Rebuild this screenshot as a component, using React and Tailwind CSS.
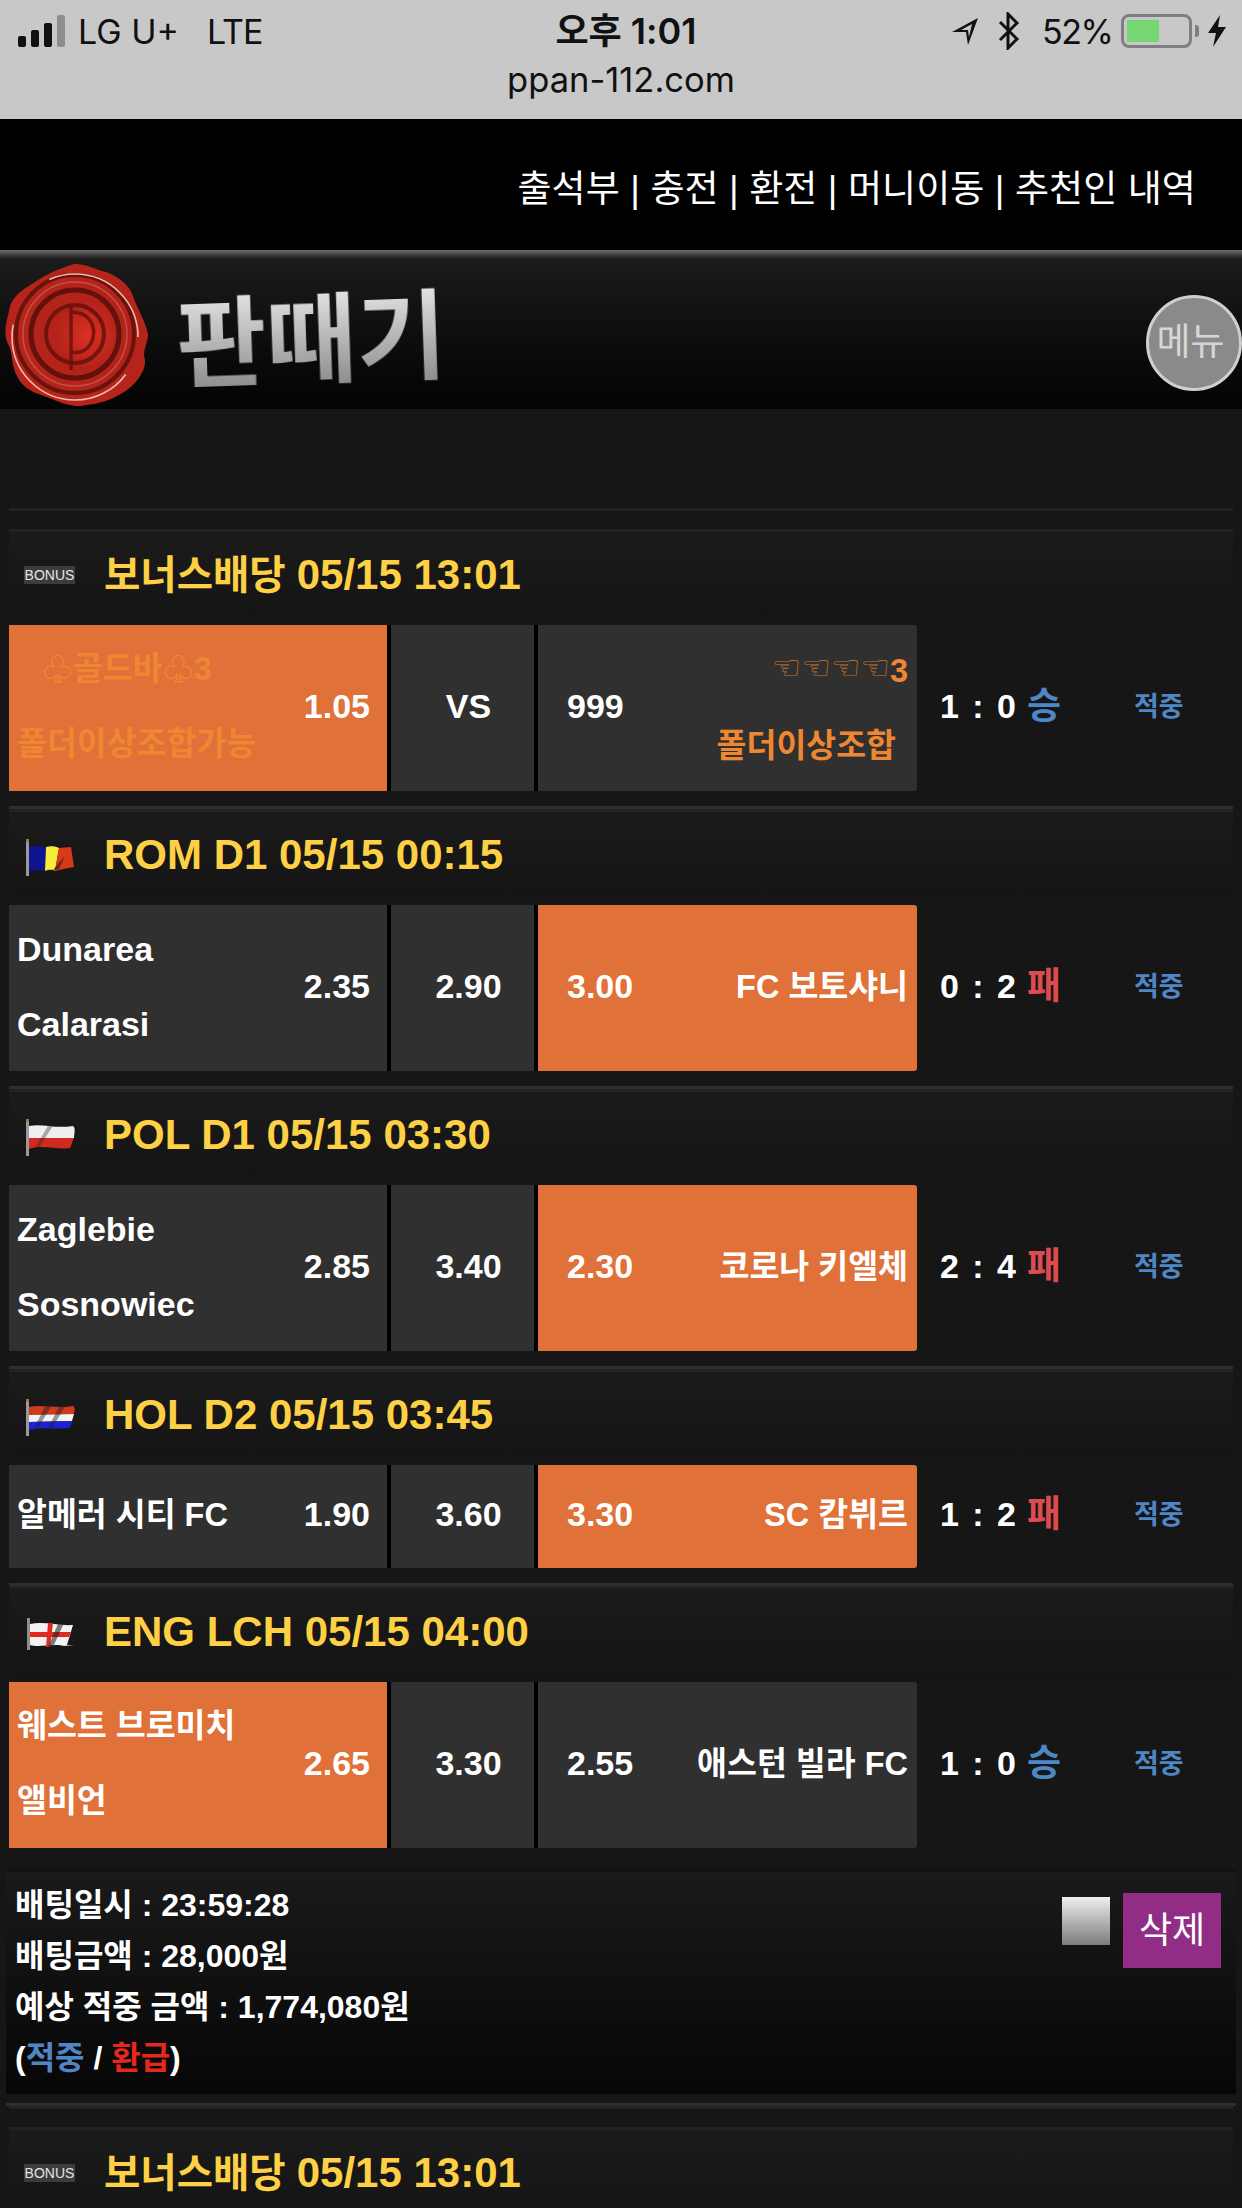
import React from "react";

const SANS = { fontFamily: '"Liberation Sans","Noto Sans CJK KR","DejaVu Sans",sans-serif' };

function Seal() {
  return (
    <svg width="148" height="146" viewBox="0 0 146 146" className="shrink-0 blur-[0.4px]">
      <defs>
        <radialGradient id="sealG" cx="58%" cy="50%" r="58%">
          <stop offset="0" stopColor="#dc3022" />
          <stop offset="0.4" stopColor="#b3231a" />
          <stop offset="1" stopColor="#b8241a" />
        </radialGradient>
      </defs>
      <path d="M72 2 C82 1 92 7 104 10 C116 14 128 24 131 34 C134 44 143 58 146 72 C146 82 140 88 143 98 C144 110 132 124 122 130 C110 138 96 142 84 143 C74 146 62 142 50 137 C38 132 24 130 16 116 C8 102 12 92 6 82 C0 70 6 56 8 44 C12 32 24 26 36 18 C48 10 60 6 72 2 Z" fill="url(#sealG)" />
      <circle cx="73" cy="72" r="59" fill="none" stroke="#5c110c" strokeWidth="4" opacity="0.85" />
      <circle cx="73" cy="75" r="63" fill="none" stroke="#eebbb2" strokeWidth="1.6" strokeDasharray="170 60" strokeDashoffset="-40" />
      <circle cx="73" cy="72" r="52" fill="none" stroke="#c9655a" strokeWidth="1.5" opacity="0.7" />
      <circle cx="73" cy="72" r="44" fill="none" stroke="#5a0f0a" strokeWidth="5" opacity="0.9" />
      <circle cx="73" cy="72" r="29" fill="none" stroke="#6a120c" strokeWidth="4" opacity="0.9" />
      <path d="M69 44 V108 M69 50 C86 50 94 62 91 76 C88 88 78 92 69 90" fill="none" stroke="#6a120c" strokeWidth="3.5" opacity="0.85" />
    </svg>
  );
}

function Logo() {
  return (
    <header className="relative flex h-[159px] items-center overflow-hidden bg-gradient-to-b from-[#6b6d6b] from-[0px] via-[#1b1b1b] via-[9px] to-[#040404]">
      <div className="ml-[1px] mt-[10px]"><Seal /></div>
      <span
        className="ml-[27px] mt-[4px] -rotate-2 bg-gradient-to-b from-[#f0f0f0] to-[#8c8c8c] bg-clip-text text-[98px] font-bold leading-[110px] text-transparent blur-[0.7px]"
        style={{ fontFamily: '"Noto Sans CJK KR",sans-serif' }}
      >
        판때기
      </span>
      <div className="ml-auto mt-[26px] flex h-[96px] w-[96px] items-center justify-center rounded-full border-[3px] border-[#cfcfcf] bg-[#8a8a8a] pr-[7px] text-[37px] text-[#d6d6d6]" style={SANS}>
        <span className="whitespace-nowrap">메뉴</span>
      </div>
    </header>
  );
}

function Signal() {
  return (
    <svg width="50" height="32" viewBox="0 0 50 32" className="shrink-0">
      <rect x="0" y="21" width="8" height="11" rx="2" fill="#111" />
      <rect x="13" y="15" width="8" height="17" rx="2" fill="#111" />
      <rect x="26" y="8" width="8" height="24" rx="2" fill="#111" />
      <rect x="39" y="0" width="8" height="32" rx="2" fill="#8e8e8e" />
    </svg>
  );
}

function StatusBar() {
  return (
    <div className="h-[119px] bg-[#c8c8c8] text-[#111]" style={{ fontFamily: 'Inter,"Noto Sans CJK KR",sans-serif' }}>
      <div className="relative flex h-[62px] items-center pl-[18px] pr-[15px] text-[34px]">
        <Signal />
        <span className="ml-[10px]">LG U+</span>
        <span className="ml-[28px] tracking-[-1px]">LTE</span>
        <span className="absolute left-[540px] w-[172px] text-center text-[36px] font-semibold">오후 1:01</span>
        <div className="ml-auto flex items-center">
          <svg width="30" height="30" viewBox="0 0 30 30" className="shrink-0"><path d="M28 2 L2 16 L16 16 L18 29 Z M22 8 L11 14 L18 14 L19 21 Z" fill="#111" fillRule="evenodd" /></svg>
          <svg width="22" height="38" viewBox="0 0 22 38" className="ml-[18px] shrink-0"><path d="M2 10 L19 27 L10 36 V2 L19 11 L2 28" fill="none" stroke="#111" strokeWidth="3" /></svg>
          <span className="ml-[22px] w-[71px] whitespace-nowrap tracking-[-1.5px]">52%</span>
          <div className="relative ml-[8px] h-[34px] w-[71px] rounded-[8px] border-[3px] border-[#7f7f7f]">
            <div className="ml-[3px] mt-[3px] h-[22px] w-[32px] bg-[#76d672]" />
          </div>
          <div className="ml-[3px] h-[12px] w-[4px] rounded-r-[3px] bg-[#7f7f7f]" />
          <svg width="20" height="32" viewBox="0 0 20 32" className="ml-[8px] shrink-0"><path d="M13 0 L1 18 H9 L6 32 L19 12 H11 Z" fill="#111" /></svg>
        </div>
      </div>
      <div className="-mt-[1px] text-center text-[34.5px] leading-[38px]">ppan-112.com</div>
    </div>
  );
}

function Nav() {
  return (
    <nav className="flex h-[131px] items-center justify-end bg-black pr-[46px] pt-[10px] text-[37px] tracking-[0.1px] text-white" style={SANS}>
      출석부 | 충전 | 환전 | 머니이동 | 추천인 내역
    </nav>
  );
}

const pole = (
  <>
    <rect x="2" y="3" width="3" height="35" fill="#9a9a9a" />
    <rect x="2" y="1" width="3" height="3" fill="#a07a3c" />
  </>
);

function Flag({ kind }) {
  if (kind === "bonus") {
    return (
      <div className="flex h-[18px] w-[51px] items-center justify-center bg-[#3c3c3c] text-[14px] font-light text-[#e4e4e4]" style={SANS}>
        BONUS
      </div>
    );
  }
  return (
    <svg width="51" height="40" viewBox="0 0 51 40" className="mt-[6px] blur-[0.4px]">
      {kind === "rom" && (
        <>
          {pole}
          <path d="M5 9 C12 7 17 9 22 9 L21 33 C15 32 10 32 5 33 Z" fill="#0d1590" />
          <path d="M22 9 C26 8 31 8 35 10 L31 33 C28 31 24 32 21 33 Z" fill="#f6ee3a" />
          <path d="M35 10 L47 9 L50 29 C44 30 38 31 31 33 Z" fill="#d93a16" />
          <path d="M41 18 L35 31 L28 33 Z" fill="#141414" opacity="0.55" />
        </>
      )}
      {kind === "pol" && (
        <>
          {pole}
          <path d="M5 8 C18 5 30 11 49 8 C52 10 50 16 50 20 L5 20 Z" fill="#efefef" />
          <path d="M5 20 H50 C48 24 47 28 46 30 C34 32 18 26 5 31 Z" fill="#d12a1e" />
          <path d="M15 30 L30 6 L25 6 L11 30 Z" fill="#222" opacity="0.35" />
        </>
      )}
      {kind === "hol" && (
        <>
          {pole}
          <path d="M5 9 C18 6 32 11 49 8 C52 10 50 14 50 16 L5 17 Z" fill="#d03a1c" />
          <path d="M5 17 L50 16 L48 23 L5 24 Z" fill="#f4f4f4" />
          <path d="M5 24 L48 23 C47 27 46 30 45 30 C32 32 18 28 5 32 Z" fill="#2020d8" />
          <path d="M14 30 L28 7 L22 7 L10 30 Z M28 30 L42 7 L36 7 L24 30 Z" fill="#222" opacity="0.45" />
        </>
      )}
      {kind === "eng" && (
        <>
          <rect x="3" y="3" width="3" height="32" fill="#8e8e8e" />
          <path d="M6 9 C20 6 34 11 49 10 L43 30 L50 30 L40 31 C30 28 16 33 6 30 Z" fill="#f2f2f2" />
          <path d="M6 17 H47 L45 22 H6 Z" fill="#e02a20" />
          <path d="M24 8 H29 L26 32 H22 Z" fill="#e02a20" />
          <path d="M34 9 L24 32 L29 32 L39 10 Z" fill="#1a1a1a" opacity="0.55" />
        </>
      )}
    </svg>
  );
}

function SectionHead({ flag, kr, title }) {
  return (
    <div className="flex h-[89px] items-center bg-gradient-to-b from-[#1b1b1b] to-[#141414] pb-[3px] pl-[15px]">
      <div className="flex w-[51px] items-center justify-center"><Flag kind={flag} /></div>
      <span className="ml-[29px] text-[42px] font-bold leading-none text-[#fdd045]" style={SANS}>
        {kr && <span className="text-[39.5px]">{kr} </span>}
        {title}
      </span>
    </div>
  );
}

function Section({ flag, kr, title, tall = true, left, right, mid, lo, ro, leftOn, score, result, last }) {
  return (
    <section className={`border-t-[3px] border-[#222222] ${last ? "pb-[21px]" : "border-b-[3px] border-b-[#2e2e2e] pb-[15px]"}`}>
      <SectionHead flag={flag} kr={kr} title={title} />
      <div className={`mt-[4px] flex ${tall ? "h-[166px]" : "h-[103px]"} items-center text-[34px] font-bold leading-[75px] text-white`} style={SANS}>
        <div className={`flex h-full w-[378px] items-center justify-between pl-[8px] pr-[17px] ${leftOn ? "bg-[#df7139]" : "bg-[#303030]"}`}>
          <div className="mb-[2px] min-w-0 whitespace-pre text-[32.5px]">{left}</div>
          <span className="mb-[4px]">{lo}</span>
        </div>
        <div className="h-full w-[4px] bg-black" />
        <div className="flex h-full w-[143px] items-center justify-center bg-[#303030] pb-[4px] pl-[12px]">{mid}</div>
        <div className="h-full w-[4px] bg-black" />
        <div className={`flex h-full w-[379px] items-center justify-between rounded-r-[3px] pl-[29px] pr-[9px] ${leftOn === false ? "bg-[#df7139]" : "bg-[#303030]"}`}>
          <span className="mb-[4px]">{ro}</span>
          <div className="mb-[2px] whitespace-pre text-right text-[32.5px]">{right}</div>
        </div>
        <div className="mb-[4px] flex w-[217px] items-center pl-[23px]">
          <span className="tracking-[2px]">{score}</span>
          <span className={`ml-[9px] text-[37px] ${result === "승" ? "text-[#4f86c6]" : "text-[#dc4b4f]"}`}>{result}</span>
        </div>
        <span className="mb-[2px] text-[27px] text-[#4f86c6]">적중</span>
      </div>
    </section>
  );
}

const gold = "text-[#ee8632]";
const Lat = ({ children }) => <div className="text-[34px]">{children}</div>;

export default function App() {
  return (
    <div className="min-h-[2208px] overflow-hidden bg-[#161616]" style={SANS}>
      <StatusBar />
      <Nav />
      <Logo />
      <main className="h-[1799px] overflow-hidden px-[9px] pt-[99px]">
        <div className="h-[3px] bg-[#222222]" />
        <div className="h-[18px]" />
        <Section
          flag="bonus"
          kr="보너스배당"
          title="05/15 13:01"
          leftOn
          left={
            <>
              <div className={`pl-[25px] ${gold}`}><span className="text-[31px]">♧</span>골드바<span className="text-[31px]">♧</span>3</div>
              <div className={gold}>폴더이상조합가능</div>
            </>
          }
          lo="1.05"
          mid="VS"
          ro="999"
          right={
            <>
              <div className={gold}><span className="align-[3px] text-[33px] font-normal text-[#c8752c]" style={{ fontFamily: '"DejaVu Sans",sans-serif' }}>☜☜☜☜</span>3</div>
              <div className={`pr-[12px] ${gold}`}>폴더이상조합</div>
            </>
          }
          score="1 : 0"
          result="승"
        />
        <Section flag="rom" title="ROM D1 05/15 00:15" leftOn={false} left={<><Lat>Dunarea</Lat><Lat>Calarasi</Lat></>} lo="2.35" mid="2.90" ro="3.00" right="FC 보토샤니" score="0 : 2" result="패" />
        <Section flag="pol" title="POL D1 05/15 03:30" leftOn={false} left={<><Lat>Zaglebie</Lat><Lat>Sosnowiec</Lat></>} lo="2.85" mid="3.40" ro="2.30" right="코로나 키엘체" score="2 : 4" result="패" />
        <Section flag="hol" title="HOL D2 05/15 03:45" tall={false} leftOn={false} left="알메러 시티 FC" lo="1.90" mid="3.60" ro="3.30" right="SC 캄뷔르" score="1 : 2" result="패" />
        <Section flag="eng" title="ENG LCH 05/15 04:00" leftOn left={<><div>웨스트 브로미치</div><div>앨비언</div></>} lo="2.65" mid="3.30" ro="2.55" right="애스턴 빌라 FC" score="1 : 0" result="승" last />

        <div className="-mx-[3px] border-t-[3px] border-[#121212]">
          <div className="flex h-[222px] items-start justify-between bg-gradient-to-b from-[#1a1a1a] to-[#070707] pl-[9px] pr-[15px] pt-[8px] text-[32px] font-bold leading-[51px] text-white">
            <div>
              <div>배팅일시 : 23:59:28</div>
              <div>배팅금액 : 28,000원</div>
              <div>예상 적중 금액 : 1,774,080원</div>
              <div>(<span className="text-[#4f86c6]">적중</span> / <span className="text-[#e5281f]">환급</span>)</div>
            </div>
            <div className="mt-[13px] flex items-start gap-[13px]">
              <div className="mt-[4px] h-[48px] w-[48px] bg-gradient-to-b from-[#f0f0f0] to-[#7d7d7d]" />
              <button className="flex h-[75px] w-[98px] items-center justify-center bg-[#922d85] text-[36px] font-normal text-white">삭제</button>
            </div>
          </div>
          <div className="mt-[9px] h-[3px] bg-[#2e2e2e]" />
        </div>
        <div className="h-[3px] bg-[#222222]" />
        <div className="h-[18px]" />
        <section className="border-t-[3px] border-[#222222]">
          <SectionHead flag="bonus" kr="보너스배당" title="05/15 13:01" />
        </section>
      </main>
    </div>
  );
}
